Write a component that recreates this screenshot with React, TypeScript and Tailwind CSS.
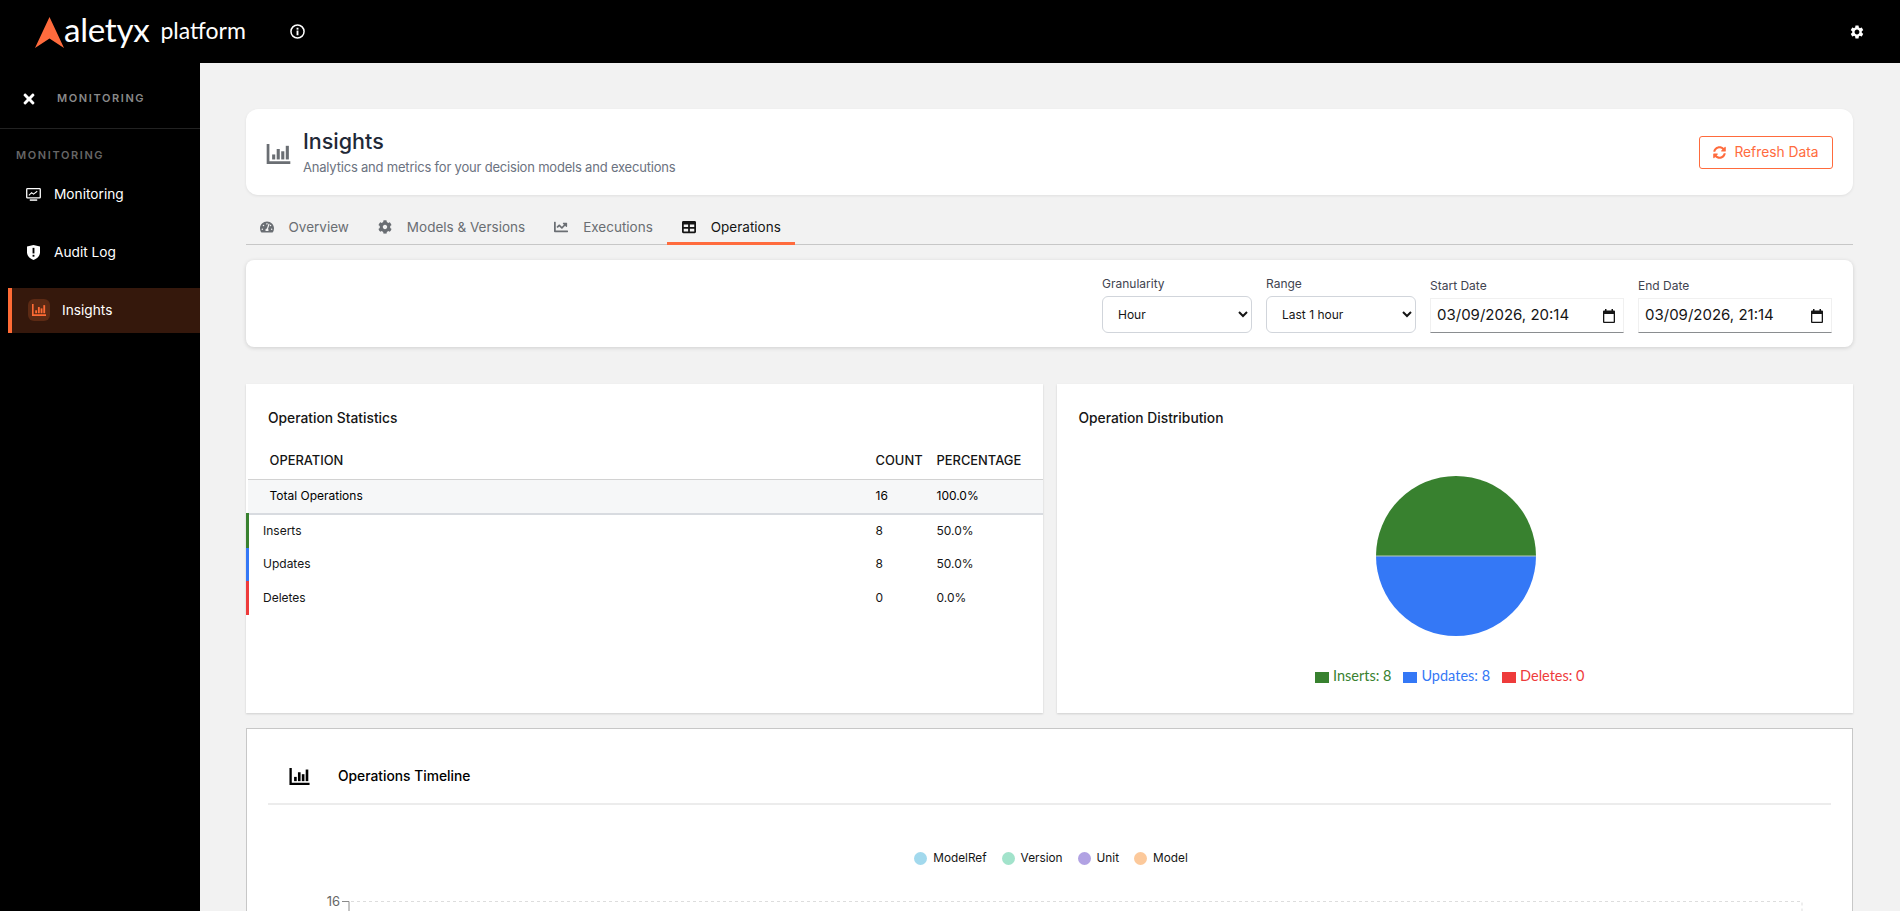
import { FaTachometerAlt, FaCog, FaChartLine, FaTable, FaSyncAlt, FaTimes } from "react-icons/fa";
import { MdSettings } from "react-icons/md";

// bar chart icon used in the header, sidebar and timeline card
function BarsIcon({ className }: { className: string }) {
  return (
    <svg viewBox="0 0 26 22" className={className} fill="currentColor">
      <path d="M0 0h3v19h23v3H0z" />
      <rect x="6" y="11.500" width="3.400" height="5.500" />
      <rect x="11" y="5.500" width="3.400" height="11.500" />
      <rect x="16" y="8" width="3.400" height="9" />
      <rect x="21" y="2" width="3.400" height="15" />
    </svg>
  );
}

function MonitorIcon() {
  return (
    <svg viewBox="0 0 16 14" className="w-[15px] h-[13px]" fill="none">
      <rect x="0.7" y="0.7" width="14.6" height="10" rx="0.8" stroke="white" strokeWidth="1.4" />
      <path d="M3 8l3-3 2 1.5L12 3.5" stroke="white" strokeWidth="1.1" />
      <path d="M4 13h8" stroke="white" strokeWidth="1.6" />
    </svg>
  );
}

function ShieldIcon() {
  return (
    <svg viewBox="0 0 14 16" className="w-[13px] h-[15px]">
      <path d="M0 1.5L7 0l7 1.5V8c0 4-3.5 6.8-7 8-3.500-1.200-7-4-7-8z" fill="white" />
      <rect x="6" y="3" width="2" height="6" fill="black" />
      <rect x="6" y="10.500" width="2" height="2" fill="black" />
    </svg>
  );
}

function CalendarIcon() {
  return (
    <svg viewBox="0 0 12 14" className="w-[12px] h-[14px]" fill="#151515">
      <path d="M2 0h1.500v1.500h5V0H10v1.500h1a1 1 0 0 1 1 1V13a1 1 0 0 1-1 1H1a1 1 0 0 1-1-1V2.500a1 1 0 0 1 1-1h1zM1.300 5v7.700h9.400V5z" />
    </svg>
  );
}

function Logo() {
  return (
    <div className="flex items-center ml-[35px] mt-[1px]">
      <svg viewBox="0 0 29 31" className="w-[29px] h-[31px]">
        <path d="M14.500 0L29 31L14.500 21.500L0 31z" fill="#ff6b3d" />
      </svg>
      <span className="text-white text-[33.200px] leading-none -mt-[4px] tracking-[-0.3px] font-['Lato',sans-serif]">aletyx</span>
      <span className="text-white text-[23px] leading-none ml-[11px] -mt-[4px] font-['Lato',sans-serif]">platform</span>
    </div>
  );
}

function Tab({ icon, label, active }: { icon: React.ReactNode; label: string; active?: boolean }) {
  return (
    <div
      className={
        active
          ? "flex items-center gap-[15px] h-[29px] px-[14.500px] pb-[4px] border-b-[3px] border-[#ff6b3d] text-[#151515] -mb-px"
          : "flex items-center gap-[15px] h-[29px] px-[14.500px] pb-[7px] text-[#6a6e73] -mb-px"
      }
    >
      {icon}
      <span>{label}</span>
    </div>
  );
}

function Stat({ label, count, pct, border }: { label: string; count: string; pct: string; border: string }) {
  return (
    <tr className="h-[33.500px]">
      <td className={border + " border-l-[3px] pl-[14px] text-[#151515]"}>{label}</td>
      <td className="text-[#151515]">{count}</td>
      <td className="text-[#151515]">{pct}</td>
    </tr>
  );
}

function DateField({ label, value }: { label: string; value: string }) {
  return (
    <div className="flex flex-col gap-[3px]">
      <span>{label}</span>
      <div className="w-[194px] h-[35px] bg-white border border-[#f0f0f0] border-b-[#8a8d90] pl-[6px] pr-[8px] text-[15px] text-[#151515] flex items-center justify-between">
        <span>{value}</span>
        <CalendarIcon />
      </div>
    </div>
  );
}

function SelectField({ label, value }: { label: string; value: string }) {
  return (
    <label className="flex flex-col gap-[3px]">
      {label}
      <select className="w-[150px] h-[37px] bg-white border border-[#d1d5db] rounded-[6px] pl-[11px] text-[12px] text-[#151515]" defaultValue={value}>
        <option>{value}</option>
      </select>
    </label>
  );
}

export default function App() {
  return (
    <div className="h-[911px] overflow-hidden bg-[#f2f2f2] font-['Inter',sans-serif] flex flex-col">
      <header className="h-[63px] bg-black flex items-center shrink-0">
        <Logo />
        <svg viewBox="0 0 16 16" className="w-[15px] h-[15px] ml-[44px]" fill="none">
          <circle cx="8" cy="8" r="7" stroke="white" strokeWidth="1.6" />
          <rect x="7" y="7" width="2" height="5" fill="white" />
          <rect x="7" y="4" width="2" height="2" fill="white" />
        </svg>
        <MdSettings className="ml-auto mr-[35px] text-white w-[16px] h-[16px]" />
      </header>
      <div className="flex flex-1 min-h-0">
        <aside className="w-[200px] bg-black shrink-0 text-white text-[13.7px]">
          <div className="h-[66px] flex items-center border-b border-[#222] pl-[21px] pt-[6px]">
            <FaTimes className="w-[16px] h-[16px]" />
            <span className="ml-[20px] text-[11px] font-semibold tracking-[1.6px] text-[#8a8a8a]">MONITORING</span>
          </div>
          <div className="pl-[16px] pt-[18px] text-[11px] font-semibold tracking-[1.6px] text-[#666]">MONITORING</div>
          <div className="flex items-center h-[58px] pl-[26px] gap-[13px] mt-[2px]">
            <MonitorIcon />
            <span>Monitoring</span>
          </div>
          <div className="flex items-center h-[58px] pl-[27px] gap-[14px]">
            <ShieldIcon />
            <span>Audit Log</span>
          </div>
          <div className="ml-[8px] mt-[6px] h-[45px] bg-[#35180c] border-l-[4px] border-[#ff6b35] flex items-center pl-[16px] gap-[12px]">
            <div className="w-[22px] h-[22px] rounded-[6px] bg-[#5c2a14] flex items-center justify-center">
              <BarsIcon className="w-[14px] h-[12px] text-[#ff6b35]" />
            </div>
            <span>Insights</span>
          </div>
        </aside>
        <main className="flex-1 pl-[46px] pr-[47px] pt-[46px] min-w-0">
          <div className="h-[86px] bg-white rounded-[12px] shadow-[0_1px_3px_rgba(0,0,0,0.08)] flex items-center pl-[20px] pr-[20px]">
            <BarsIcon className="w-[25px] h-[20px] text-[#6a6e73] mt-[4px]" />
            <div className="ml-[12px] mb-[2px]">
              <h1 className="text-[21.500px] leading-[28px] font-medium text-[#1f2937]">Insights</h1>
              <p className="mt-[3px] text-[13px] leading-[18px] tracking-[-0.2px] text-[#6b7280]">Analytics and metrics for your decision models and executions</p>
            </div>
            <button className="ml-auto h-[33px] w-[134px] border border-[#ff6b3d] rounded-[3px] text-[#ff6b3d] text-[13.8px] flex items-center justify-center gap-[8px]">
              <FaSyncAlt className="w-[13px] h-[13px]" />
              Refresh Data
            </button>
          </div>
          <nav className="mt-[21px] h-[29px] border-b border-[#c7c7c7] text-[13.500px]">
            <div className="flex items-end -ml-[1px]">
              <Tab icon={<FaTachometerAlt className="w-[14px] h-[14px]" />} label="Overview" />
              <Tab icon={<FaCog className="w-[14px] h-[14px]" />} label="Models & Versions" />
              <Tab icon={<FaChartLine className="w-[14px] h-[14px]" />} label="Executions" />
              <Tab icon={<FaTable className="w-[14px] h-[14px] text-[#151515]" />} label="Operations" active />
            </div>
          </nav>
          <div className="mt-[15px] h-[87px] bg-white rounded-[8px] shadow-[0_1px_4px_rgba(0,0,0,0.15)] flex justify-end items-end pb-[14px] pr-[21px] gap-[14px] text-[12px] text-[#3f4450]">
            <SelectField label="Granularity" value="Hour" />
            <SelectField label="Range" value="Last 1 hour" />
            <DateField label="Start Date" value="03/09/2026, 20:14" />
            <DateField label="End Date" value="03/09/2026, 21:14" />
          </div>
          <div className="mt-[37px] grid grid-cols-2 gap-[14px] h-[329px]">
            <section className="bg-white shadow-[0_1px_2px_rgba(0,0,0,0.15)] pt-[24px]">
              <h2 className="pl-[22px] text-[13.8px] leading-[20px] font-medium text-[#151515]">Operation Statistics</h2>
              <table className="w-full mt-[14px] text-[12px] table-fixed">
                <thead>
                  <tr className="h-[37px] border-b border-[#d2d2d2] text-left text-[#151515] text-[12.900px]">
                    <th className="pl-[22px] font-medium">OPERATION</th>
                    <th className="w-[61px] font-medium">COUNT</th>
                    <th className="w-[106px] font-medium">PERCENTAGE</th>
                  </tr>
                </thead>
                <tbody>
                  <tr className="h-[35px] bg-[#f6f7f8] border-b-2 border-[#d8dbe0]">
                    <td className="pl-[22px]">Total Operations</td>
                    <td>16</td>
                    <td>100.0%</td>
                  </tr>
                  <Stat label="Inserts" count="8" pct="50.0%" border="border-[#38812f]" />
                  <Stat label="Updates" count="8" pct="50.0%" border="border-[#3478f6]" />
                  <Stat label="Deletes" count="0" pct="0.0%" border="border-[#ee3b3b]" />
                </tbody>
              </table>
            </section>
            <section className="bg-white shadow-[0_1px_2px_rgba(0,0,0,0.15)] pt-[24px] flex flex-col">
              <h2 className="pl-[22px] text-[13.8px] leading-[20px] font-medium text-[#151515]">Operation Distribution</h2>
              <div className="flex justify-center mt-[48px] pl-[2px]">
                <svg viewBox="0 0 160 160" className="w-[160px] h-[160px]">
                  <path d="M0 80a80 80 0 0 1 160 0z" fill="#38812f" />
                  <path d="M0 80a80 80 0 0 0 160 0z" fill="#3478f6" />
                  <rect y="79.500" width="160" height="1" fill="#b8cdb8" />
                </svg>
              </div>
              <div className="flex justify-center gap-[12px] mt-[31px] pr-[10px] text-[14.500px] leading-[18px] font-['Lato',sans-serif]">
                <span className="flex items-center gap-[4px] text-[#38812f]"><i className="w-[14px] h-[11px] bg-[#38812f] mt-[2px]" />Inserts: 8</span>
                <span className="flex items-center gap-[4px] text-[#3478f6]"><i className="w-[14px] h-[11px] bg-[#3478f6] mt-[2px]" />Updates: 8</span>
                <span className="flex items-center gap-[4px] text-[#ee3b3b]"><i className="w-[14px] h-[11px] bg-[#ee3b3b] mt-[2px]" />Deletes: 0</span>
              </div>
            </section>
          </div>
          <section className="mt-[15px] bg-white border border-[#c7c7c7] h-[300px] px-[21px]">
            <div className="h-[76px] border-b-2 border-[#ececec] flex items-center pl-[21px] pt-[20px]">
              <BarsIcon className="w-[21px] h-[17px] text-black" />
              <h3 className="ml-[28px] text-[13.8px] font-medium text-black">Operations Timeline</h3>
            </div>
            <div className="flex justify-center gap-[15px] mt-[44px] pl-[3px] text-[11.8px] leading-[18px] text-[#151515]">
              <span className="flex items-center gap-[6px]"><i className="w-[13px] h-[13px] rounded-full bg-[#a2d9ed]" />ModelRef</span>
              <span className="flex items-center gap-[6px]"><i className="w-[13px] h-[13px] rounded-full bg-[#a2e3cb]" />Version</span>
              <span className="flex items-center gap-[6px]"><i className="w-[13px] h-[13px] rounded-full bg-[#b1a2e3]" />Unit</span>
              <span className="flex items-center gap-[6px]"><i className="w-[13px] h-[13px] rounded-full bg-[#fcc99b]" />Model</span>
            </div>
            <svg width="1565" height="60" className="mt-[24px] block overflow-visible" fill="none">
              <text x="72" y="14.500" textAnchor="end" fontSize="13" fill="#666">16</text>
              <path d="M74 10.500h7V60" stroke="#8a8a8a" />
              <path d="M83 10.500H1534V60" stroke="#ddd" strokeDasharray="3 3" />
            </svg>
          </section>
        </main>
      </div>
    </div>
  );
}
